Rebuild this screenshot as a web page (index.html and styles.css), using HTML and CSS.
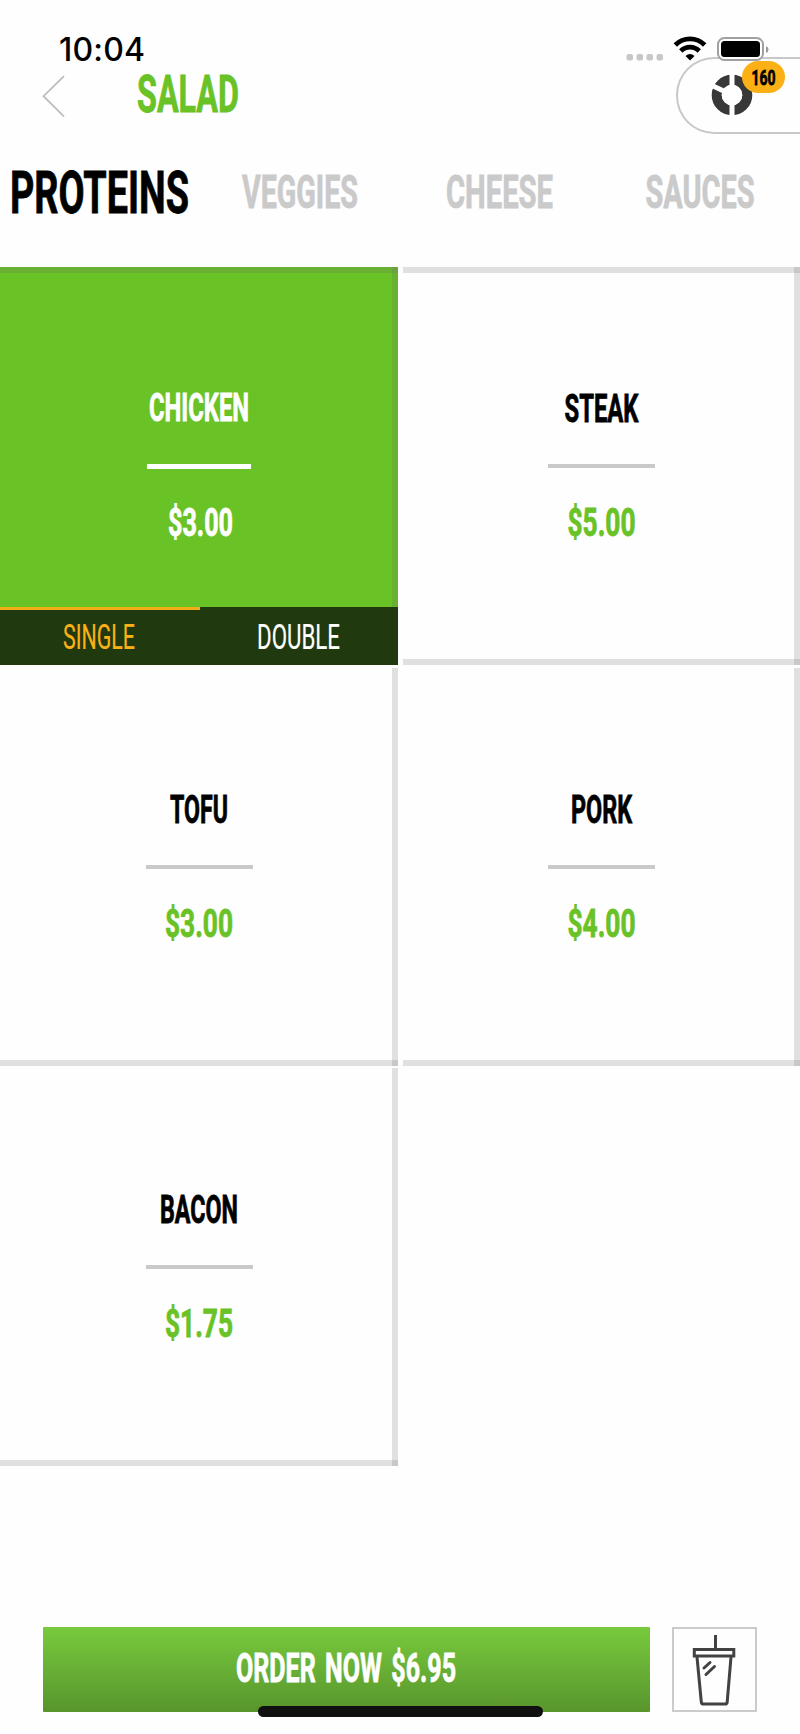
FILE: index.html
```html
<!DOCTYPE html>
<html lang="en">
<head>
<meta charset="utf-8">
<title>Salad</title>
<link rel="stylesheet" href="styles.css">
</head>
<body>
<main class="screen">
  <div class="status">
    <span class="time">10:04</span>
    <svg class="status-icons" width="144" height="26" viewBox="0 0 144 26">
      <g fill="#c7c7c7"><rect x="0.500" y="18" width="6.500" height="6.500" rx="2"/><rect x="10.500" y="18" width="6.500" height="6.500" rx="2"/><rect x="20.500" y="18" width="6.500" height="6.500" rx="2"/><rect x="30.500" y="18" width="6.500" height="6.500" rx="2"/></g>
      <g fill="none" stroke="#000" stroke-width="4.800"><path d="M49.300 9a20.500 20.500 0 0 1 29.400 0"/><path d="M54.800 15a13 13 0 0 1 18.400 0"/></g>
      <path d="M59.500 20q4.500-4 9 0l-4.500 4.500z"/>
      <rect x="92" y="2" width="45" height="22" rx="6.500" fill="#fff" stroke="#a0a0a0" stroke-width="2"/>
      <rect x="95" y="5" width="39" height="16" rx="3.500"/>
      <path d="M140 10q2.500 1 2.500 3.500t-2.500 3.500z" fill="#999"/>
    </svg>
  </div>
  <header class="nav">
    <svg class="back" width="24" height="42" viewBox="0 0 24 42"><path d="M22 1.200L1.500 21.200 22 41.500" fill="none" stroke="#bbb" stroke-width="1.700"/></svg>
    <svg class="label title" width="100" height="37"><text x="-1" y="37" font-size="51" textLength="102" lengthAdjust="spacingAndGlyphs">SALAD</text></svg>
    <div class="macro">
      <svg class="ring" width="42" height="42" viewBox="0 0 42 42">
        <circle cx="21" cy="21" r="15.300" fill="none" stroke="#383838" stroke-width="10"/>
        <path d="M21-1V43M21 21L-4 9" stroke="#fff" stroke-width="5"/>
        <circle cx="21" cy="21" r="10.300" fill="#fff"/>
      </svg>
      <div class="badge"><svg class="label" width="23" height="15"><text x="-.5" y="15" font-size="21" textLength="24" lengthAdjust="spacingAndGlyphs">160</text></svg></div>
    </div>
  </header>
  <nav class="tabs">
    <svg class="label active" width="175" height="42"><text x="-3" y="42" font-size="59" textLength="179" lengthAdjust="spacingAndGlyphs">PROTEINS</text></svg>
    <svg class="label" width="115" height="33"><text x="-1" y="33" font-size="46.500" textLength="116" lengthAdjust="spacingAndGlyphs">VEGGIES</text></svg>
    <svg class="label" width="105" height="33"><text x="-2" y="33" font-size="46.500" textLength="107" lengthAdjust="spacingAndGlyphs">CHEESE</text></svg>
    <svg class="label" width="107" height="33"><text x="-1.500" y="33" font-size="46.500" textLength="109" lengthAdjust="spacingAndGlyphs">SAUCES</text></svg>
  </nav>
  <section class="grid">
    <article class="tile top selected">
      <svg class="label name" width="98" height="27"><text x="-1" y="27.500" font-size="38" textLength="100" lengthAdjust="spacingAndGlyphs">CHICKEN</text></svg>
      <div class="rule"></div>
      <svg class="label price" width="63" height="27"><text x="-1" y="27.500" font-size="38" textLength="65" lengthAdjust="spacingAndGlyphs">$3.00</text></svg>
      <div class="portions">
        <div class="portion on"><svg class="label" width="70" height="25"><text x="-2" y="24.500" font-size="35.500" textLength="72" lengthAdjust="spacingAndGlyphs">SINGLE</text></svg></div>
        <div class="portion"><svg class="label" width="80" height="25"><text x="-2" y="24.500" font-size="35.500" textLength="83" lengthAdjust="spacingAndGlyphs">DOUBLE</text></svg></div>
      </div>
    </article>
    <article class="tile top">
      <svg class="label name" width="73" height="27"><text x="-.5" y="27.500" font-size="38" textLength="74" lengthAdjust="spacingAndGlyphs">STEAK</text></svg>
      <div class="rule"></div>
      <svg class="label price" width="66" height="27"><text x="-1.500" y="27.500" font-size="38" textLength="68" lengthAdjust="spacingAndGlyphs">$5.00</text></svg>
    </article>
    <article class="tile">
      <svg class="label name" width="57" height="27"><text x="-1" y="27.500" font-size="38" textLength="58" lengthAdjust="spacingAndGlyphs">TOFU</text></svg>
      <div class="rule"></div>
      <svg class="label price" width="66" height="27"><text x="-1" y="27.500" font-size="38" textLength="68" lengthAdjust="spacingAndGlyphs">$3.00</text></svg>
    </article>
    <article class="tile">
      <svg class="label name" width="60" height="27"><text x="-1" y="27.500" font-size="38" textLength="61" lengthAdjust="spacingAndGlyphs">PORK</text></svg>
      <div class="rule"></div>
      <svg class="label price" width="66" height="27"><text x="-1.500" y="27.500" font-size="38" textLength="68" lengthAdjust="spacingAndGlyphs">$4.00</text></svg>
    </article>
    <article class="tile">
      <svg class="label name" width="76" height="27"><text x="-1" y="27.500" font-size="38" textLength="78" lengthAdjust="spacingAndGlyphs">BACON</text></svg>
      <div class="rule"></div>
      <svg class="label price" width="66" height="27"><text x="-1" y="27.500" font-size="38" textLength="68" lengthAdjust="spacingAndGlyphs">$1.75</text></svg>
    </article>
  </section>
  <footer class="footer">
    <div class="order"><svg class="label" width="218" height="29"><text x="-1" y="29" font-size="40" textLength="220" lengthAdjust="spacingAndGlyphs">ORDER NOW $6.95</text></svg></div>
    <div class="drink">
      <svg width="44" height="74" viewBox="0 0 44 74" fill="none" stroke="#424242" stroke-width="3" stroke-linejoin="round" stroke-linecap="round">
        <path d="M23.500 2v13" stroke-linecap="butt"/>
        <rect x="2.300" y="16.500" width="39.500" height="6.500" stroke-linejoin="miter"/>
        <path d="M5 24l4.300 45q.2 2 2.200 2h21.500q2 0 2.200-2L39 24"/>
        <path d="M12 35l6-5.500M14 41.500l8.500-8"/>
      </svg>
    </div>
    <div class="home"></div>
  </footer>
</main>
</body>
</html>
```
FILE: styles.css
```css
* { box-sizing: border-box; }
body { margin: 0; background: #fefefe; font-family: Roboto, "Liberation Sans", sans-serif; }
.screen { width: 800px; height: 1734px; overflow: hidden; display: flex; flex-direction: column; }
svg { display: block; flex: none; }

/* Condensed uppercase lettering; the box height equals the cap height. */
.label { overflow: visible; fill: currentColor; stroke: currentColor; stroke-width: .8px; font-weight: 700; }

.status { height: 57px; padding: 36px 30px 0 59px; display: flex; justify-content: space-between; align-items: flex-start; position: relative; z-index: 1; }
.time { font: 550 32px/28px Inter, sans-serif; letter-spacing: .2px; }
.status-icons { overflow: visible; }

.nav { height: 77px; padding-left: 42px; display: flex; align-items: flex-start; }
.back { margin-top: 18px; }
.title { margin: 18px 0 0 72px; color: #69c226; }
.macro { position: relative; width: 124px; height: 77px; margin-left: auto; padding: 15px 0 0 33px; border: 2px solid #c8c8c8; border-right: 0; border-radius: 38px 0 0 38px; }
.badge { position: absolute; left: 64px; top: 2px; width: 43px; height: 32px; border-radius: 16px; background: #fbb116; color: #000; display: flex; align-items: center; justify-content: center; }

.tabs { height: 115px; margin-bottom: 18px; display: grid; grid-template-columns: repeat(4, 200px); justify-items: center; align-items: center; color: #cacaca; }
.active { color: #000; }

.grid { display: grid; grid-template-columns: 398px 397px; grid-auto-rows: 398px; gap: 2.5px 5px; }
.tile { position: relative; padding-top: 127px; display: flex; flex-direction: column; align-items: center;
  background: linear-gradient(#68686833, #68686833) right / 6px 100% no-repeat, linear-gradient(#68686833, #68686833) bottom / 100% 6px no-repeat; }
.top { background: linear-gradient(#68686833, #68686833) right / 6px 100% no-repeat, linear-gradient(#68686833, #68686833) bottom / 100% 6px no-repeat, linear-gradient(#68686833, #68686833) top / 100% 6px no-repeat; }
.selected { padding-top: 126px; background-color: #69c226; color: #fff; }
.rule { width: 107px; height: 4px; margin: 43px 0 40px; background: #c9c9c9; }
.price { color: #69c226; }
.selected .rule { width: 104px; height: 5px; margin: 44px 0 39px; background: #fff; }
.selected .price { color: #fff; margin-left: 3px; }
.portions { align-self: stretch; margin-top: auto; height: 58px; display: grid; grid-template-columns: 200px 198px; background: #20390f; }
.portion { display: flex; justify-content: center; align-items: center; border-top: 3px solid transparent; padding-bottom: 3px; }
.portion .label { font-weight: 400; stroke-width: .2px; }
.portion.on { color: #fbb116; border-top-color: #f0ad17; }

.footer { position: relative; height: 107px; margin-top: auto; padding-left: 43px; display: flex; gap: 22px; }
.order { width: 607px; height: 85px; padding: 26px 0 0 194px; background: linear-gradient(#78ca3d, #58952d); border-radius: 1px; color: #fff; word-spacing: 5px; }
.drink { width: 85px; height: 85px; border: 2px solid #cbcbcb; display: flex; justify-content: center; align-items: center; }
.drink svg { margin-right: 2px; }
.home { position: absolute; left: 258px; top: 79px; width: 285px; height: 11px; border-radius: 6px; background: #101010; }
```
